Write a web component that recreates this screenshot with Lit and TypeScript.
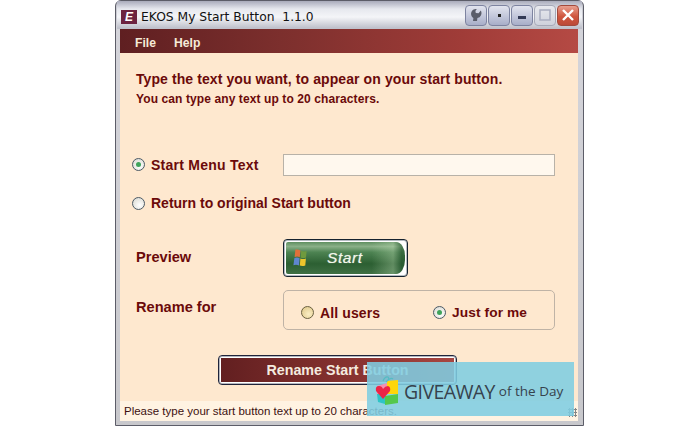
import { LitElement, html, css, svg } from 'lit';
import { customElement } from 'lit/decorators.js';

const radio = (on: boolean, tint = false) => html`
  <span class="radio ${tint ? 'tint' : ''}">${on ? html`<span class="dot"></span>` : ''}</span>
`;

const flag = svg`
  <svg class="flag" width="14" height="18" viewBox="0 0 14 18">
    <path d="M2.4 0.6 Q5 0 7.4 1.4 L6.8 8.2 Q4.4 7 1.6 8 Z" fill="#e0703a"/>
    <path d="M8.2 1.8 Q11 3 13.6 2 L13 8.6 Q10.2 9.6 7.6 8.6 Z" fill="#6f9a3e"/>
    <path d="M1.4 9 Q4.2 7.9 6.6 9.2 L6 16.4 Q3.2 15.2 0.4 16.2 Z" fill="#5f86d0"/>
    <path d="M7.4 9.6 Q10.2 10.6 12.9 9.6 L12.3 16.4 Q9.4 17.6 6.8 16.6 Z" fill="#ecc52c"/>
  </svg>
`;

@customElement('app-root')
export class AppRoot extends LitElement {
  static styles = css`
    :host {
      display: block;
      width: 700px;
      height: 426px;
      background: #fff;
      overflow: hidden;
      position: relative;
      font-family: 'Liberation Sans', Arial, sans-serif;
    }
    .window {
      box-sizing: border-box;
      width: 469px;
      height: 426px;
      margin-left: 115px;
      padding: 0 5px 4px 4px;
      background: linear-gradient(#8d90a0, #c9cad2 4px, #d4d4da 30px, #c8c8cc);
      border: 1px solid #5c5d68;
      border-top-left-radius: 6px;
      border-top-right-radius: 6px;
      display: flex;
      flex-direction: column;
      position: relative;
    }
    .titlebar {
      height: 28px;
      flex: none;
      display: flex;
      align-items: center;
      gap: 4px;
      margin: 0 -4px 0 -3px;
      padding: 0 3px 0 4px;
      background: linear-gradient(#a9abbb, #e6e8ee 8px, #f4f5f8 16px, #bfc1cb 27px);
      font: 12.3px 'DejaVu Sans', Tahoma, sans-serif;
      color: #111;
    }
    .logo {
      width: 16px;
      height: 14px;
      margin-top: 3px;
      background: #6c2340;
      color: #fff;
      font: italic bold 12px/14px 'Liberation Sans', sans-serif;
      text-align: center;
    }
    .title {
      flex: 1;
      white-space: pre;
      padding-top: 4px;
    }
    .caps {
      display: flex;
      gap: 1px;
    }
    .cap {
      box-sizing: border-box;
      width: 22px;
      height: 21px;
      border: 1px solid #7d83a0;
      border-radius: 4px;
      background: linear-gradient(#e2e4ee, #c2c6da 55%, #a8aec8);
      display: flex;
      align-items: center;
      justify-content: center;
    }
    .cap.off {
      background: linear-gradient(#e8e9ee, #cfd2dc);
      border-color: #a6a9b8;
    }
    .cap.close {
      background: linear-gradient(#e8a090, #d0563e 55%, #bb4a38);
      border-color: #a34a3c;
    }
    .menubar {
      flex: none;
      box-sizing: border-box;
      height: 24px;
      display: flex;
      align-items: center;
      gap: 18px;
      padding: 3px 0 0 15px;
      background: linear-gradient(90deg, #5f1f21, #7c2f2d 35%, #a03c38 75%, #b54a44);
      color: #f6ead8;
      font-size: 12.2px;
      font-weight: bold;
    }
    .body {
      flex: 1;
      background: #fee8cf;
      color: #6b0a0a;
      font-weight: bold;
      padding: 18px 0 0 16px;
      display: flex;
      flex-direction: column;
    }
    .head {
      font-size: 14px;
      letter-spacing: 0.09px;
      line-height: 16px;
    }
    .sub {
      font-size: 12px;
      letter-spacing: 0.1px;
      line-height: 14px;
      margin-top: 5px;
    }
    .row {
      display: flex;
      align-items: center;
      font-size: 14px;
    }
    .row-field {
      margin-top: 48px;
    }
    .row-return {
      margin-top: 19px;
    }
    .row-preview {
      margin-top: 28px;
    }
    .row-for {
      margin-top: 13px;
    }
    .row-rename {
      margin-top: 25px;
    }
    .opt {
      display: flex;
      align-items: center;
      gap: 6px;
      margin-left: -4px;
    }
    .opt-a {
      width: 151px;
      letter-spacing: 0.25px;
      padding-bottom: 1px;
    }
    .radio {
      box-sizing: border-box;
      width: 13px;
      height: 13px;
      border-radius: 50%;
      border: 1px solid #4b5a66;
      background: radial-gradient(circle at 60% 65%, #fff, #e2e2dc 70%, #c8c8c0);
      display: flex;
      align-items: center;
      justify-content: center;
      flex: none;
    }
    .radio.tint {
      background: radial-gradient(circle at 60% 65%, #fbeec4, #e3cd92 80%);
      border-color: #6a6040;
    }
    .dot {
      width: 5px;
      height: 5px;
      border-radius: 50%;
      background: #3fa35b;
    }
    .field {
      box-sizing: border-box;
      width: 272px;
      height: 22px;
      background: #fff8ee;
      border: 1px solid #b8b2a8;
    }
    .label {
      width: 147px;
      flex: none;
      font-size: 14.6px;
    }
    .label-preview {
      margin-top: -2px;
    }
    .label-for {
      margin-top: -6px;
    }
    .start {
      box-sizing: border-box;
      width: 125px;
      height: 38px;
      border: 1px solid #16222e;
      border-radius: 4px;
      padding: 2px;
      background: #fff;
      box-shadow: inset 0 0 0 1px rgba(40, 60, 80, 0.35);
      display: flex;
    }
    .start-in {
      flex: 1;
      border-radius: 2px 9px 9px 2px / 2px 14px 14px 2px;
      background:
        linear-gradient(90deg, transparent 72%, rgba(190, 220, 180, 0.35) 90%, rgba(40, 90, 50, 0.6) 97%),
        linear-gradient(#5f8f60, #8ab088 14%, #4d8352 32%, #2c5f32 68%, #3f7044);
      display: flex;
      align-items: center;
      padding-left: 7px;
      gap: 20px;
      color: #f2f6ea;
      font: italic 15.5px 'Liberation Sans', sans-serif;
      letter-spacing: 0.6px;
      text-shadow: 0 0 1px rgba(255, 255, 255, 0.6);
    }
    .flag {
      flex: none;
    }
    .group {
      box-sizing: border-box;
      width: 272px;
      height: 40px;
      border: 1px solid #bfb3a6;
      border-radius: 5px;
      display: flex;
      align-items: center;
      padding: 5px 0 0 17px;
    }
    .group .opt {
      margin-left: 0;
      letter-spacing: 0.12px;
    }
    .group .opt:first-child {
      width: 132px;
    }
    .group .opt:last-child {
      font-size: 13.7px;
    }
    .rename {
      box-sizing: border-box;
      width: 239px;
      height: 30px;
      margin-left: 82px;
      border: 1px solid #20243a;
      border-radius: 4px;
      padding: 2px;
      background: #fff;
      box-shadow: inset 0 0 0 1px rgba(40, 45, 70, 0.35);
      display: flex;
    }
    .rename-in {
      flex: 1;
      background: linear-gradient(90deg, #621f20, #8a3431 60%, #a84641);
      color: #f4eadf;
      font-size: 14.3px;
      display: flex;
      align-items: center;
      justify-content: center;
    }
    .status {
      flex: none;
      height: 20px;
      background: #fff3e2;
      color: #3c1010;
      font-size: 11.5px;
      line-height: 20px;
      padding-left: 4px;
      white-space: nowrap;
    }
    .grip {
      position: absolute;
      right: 6px;
      bottom: 8px;
      width: 9px;
      height: 9px;
      background: radial-gradient(circle, #858585 1px, transparent 1.2px) 0 0 / 3px 3px;
    }
    .ad {
      position: absolute;
      left: 367px;
      top: 362px;
      width: 207px;
      height: 54px;
      background: rgba(127, 205, 225, 0.88);
      display: flex;
      align-items: center;
      padding: 4px 0 0 8px;
      box-sizing: border-box;
      gap: 5px;
      color: #36424d;
      white-space: nowrap;
    }
    .ad-big {
      font: 19.5px 'Open Sans', 'Liberation Sans', sans-serif;
      letter-spacing: -0.6px;
    }
    .ad-small {
      font: 13.5px 'Open Sans', 'Liberation Sans', sans-serif;
      margin-left: -1px;
    }
  `;

  render() {
    return html`
      <div class="window">
        <div class="titlebar">
          <span class="logo">E</span>
          <span class="title">EKOS My Start Button  1.1.0</span>
          <div class="caps">
            <span class="cap">
              <svg width="14" height="14" viewBox="0 0 14 14">
                <path d="M4.6 1.4 A5 5 0 0 0 4.4 10 L4 13 L8 13 L8.4 10 A5 5 0 0 0 11.8 2.6 L9.6 5.2 L6.8 5 L6.4 3 L7.8 1 A5 5 0 0 0 4.6 1.4 Z" fill="#5a5d6a"/>
              </svg>
            </span>
            <span class="cap"><svg width="4" height="4"><rect x="1" y="1" width="3" height="3" fill="#222"/></svg></span>
            <span class="cap"><svg width="10" height="10"><rect x="1" y="6" width="8" height="3" fill="#333a55"/></svg></span>
            <span class="cap off"><svg width="12" height="12"><rect x="1" y="1" width="10" height="10" fill="none" stroke="#a9adc0" stroke-width="1.5"/></svg></span>
            <span class="cap close">
              <svg width="14" height="14"><path d="M2 2 L12 12 M12 2 L2 12" stroke="#fff" stroke-width="2.4"/></svg>
            </span>
          </div>
        </div>
        <div class="menubar"><span>File</span><span>Help</span></div>
        <div class="body">
          <div class="head">Type the text you want, to appear on your start button.</div>
          <div class="sub">You can type any text up to 20 characters.</div>
          <div class="row row-field">
            <label class="opt opt-a">${radio(true)}Start Menu Text</label>
            <span class="field"></span>
          </div>
          <div class="row row-return">
            <label class="opt">${radio(false)}Return to original Start button</label>
          </div>
          <div class="row row-preview">
            <span class="label label-preview">Preview</span>
            <div class="start">
              <div class="start-in">${flag}<span>Start</span></div>
            </div>
          </div>
          <div class="row row-for">
            <span class="label label-for">Rename for</span>
            <div class="group">
              <label class="opt">${radio(false, true)}All users</label>
              <label class="opt">${radio(true)}Just for me</label>
            </div>
          </div>
          <div class="row row-rename">
            <div class="rename"><div class="rename-in">Rename Start Button</div></div>
          </div>
        </div>
        <div class="status">Please type your start button text up to 20 characters.</div>
        <div class="grip"></div>
      </div>
      <div class="ad">
        <svg width="24" height="30" viewBox="0 0 24 30">
          <path d="M2 10 L12 7 L12 18 L2 18 Z" fill="#f48fb1"/>
          <path d="M12 5 L23 4 L23 18 L12 18 Z" fill="#ffd60a"/>
          <path d="M2 18 L10 18 L10 28 L3 26 Z" fill="#2ec4c6"/>
          <path d="M10 20 L23 18 L23 27 L10 29 Z" fill="#54c84d"/>
          <path d="M8 23 L1 15 Q0 10 4 10 Q7 10 8 13 Q10 10 13 10 Q16 11 15 15 Z" fill="#ee2446"/>
          <path d="M8 5 Q10 0 13 1 Q15 3 11 6 M11 6 Q16 1 18 3" fill="none" stroke="#54bcc4" stroke-width="1.2"/>
        </svg>
        <span class="ad-big">GIVEAWAY</span><span class="ad-small">of the Day</span>
      </div>
    `;
  }
}
